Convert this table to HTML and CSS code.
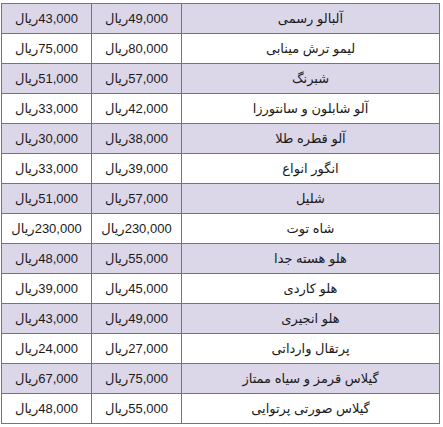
FILE: index.html
```html
<!DOCTYPE html>
<html lang="fa" dir="rtl">
<head>
<meta charset="utf-8">
<link rel="stylesheet" href="styles.css">
</head>
<body>
<table class="prices">
<tbody>
<tr class="alt"><td class="name">آلبالو رسمی</td><td class="p">49,000ریال</td><td class="p">43,000ریال</td></tr>
<tr><td class="name">لیمو ترش مینابی</td><td class="p">80,000ریال</td><td class="p">75,000ریال</td></tr>
<tr class="alt"><td class="name">شبرنگ</td><td class="p">57,000ریال</td><td class="p">51,000ریال</td></tr>
<tr><td class="name">آلو شابلون و سانتورزا</td><td class="p">42,000ریال</td><td class="p">33,000ریال</td></tr>
<tr class="alt"><td class="name">آلو قطره طلا</td><td class="p">38,000ریال</td><td class="p">30,000ریال</td></tr>
<tr><td class="name">انگور انواع</td><td class="p">39,000ریال</td><td class="p">33,000ریال</td></tr>
<tr class="alt"><td class="name">شلیل</td><td class="p">57,000ریال</td><td class="p">51,000ریال</td></tr>
<tr><td class="name">شاه توت</td><td class="p">230,000ریال</td><td class="p">230,000ریال</td></tr>
<tr class="alt"><td class="name">هلو هسته جدا</td><td class="p">55,000ریال</td><td class="p">48,000ریال</td></tr>
<tr><td class="name">هلو کاردی</td><td class="p">45,000ریال</td><td class="p">39,000ریال</td></tr>
<tr class="alt"><td class="name">هلو انجیری</td><td class="p">49,000ریال</td><td class="p">43,000ریال</td></tr>
<tr><td class="name">پرتقال وارداتی</td><td class="p">27,000ریال</td><td class="p">24,000ریال</td></tr>
<tr class="alt"><td class="name">گیلاس قرمز و سیاه ممتاز</td><td class="p">75,000ریال</td><td class="p">67,000ریال</td></tr>
<tr><td class="name">گیلاس صورتی پرتوایی</td><td class="p">55,000ریال</td><td class="p">48,000ریال</td></tr>
</tbody>
</table>
</body>
</html>
```
FILE: styles.css
```css
html, body {
  margin: 0;
  padding: 0;
  background: #ffffff;
}
body {
  padding: 3px 3px 0 2px;
  font-family: "Liberation Sans", "DejaVu Sans", sans-serif;
  font-size: 13px;
  color: #1a1a1a;
}
.prices {
  border-collapse: collapse;
  width: 438px;
  table-layout: fixed;
}
.prices td {
  border: 1px solid #7a6d8e;
  height: 30px;
  padding: 0;
  text-align: center;
  vertical-align: middle;
  white-space: nowrap;
  box-sizing: border-box;
}
.prices td.name {
  width: 258px;
}
.prices td.p {
  width: 90px;
  font-size: 13px;
}
.prices tr.alt td {
  background: #dcd6e9;
}
```
